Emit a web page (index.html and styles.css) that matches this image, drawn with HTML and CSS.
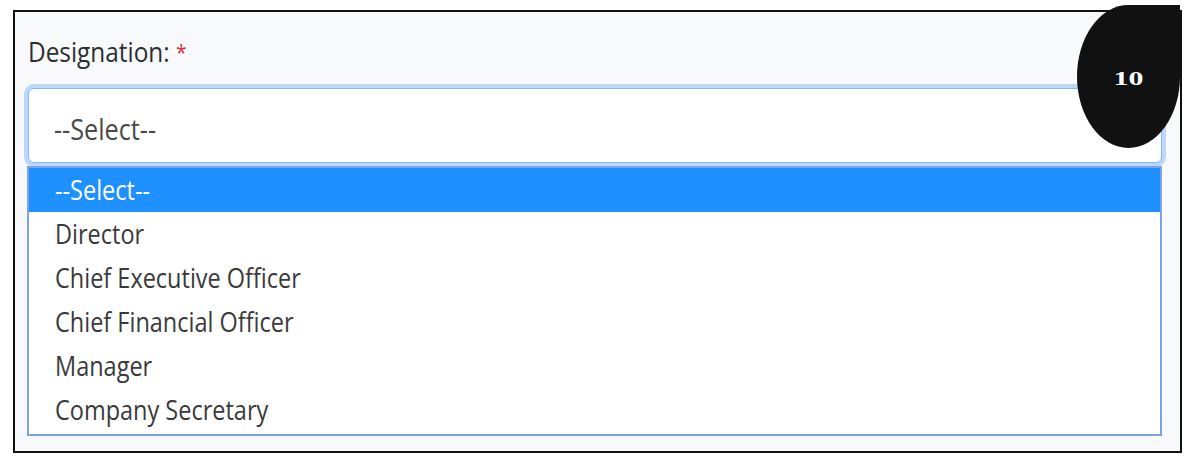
FILE: index.html
```html
<!DOCTYPE html>
<html lang="en">
<head>
    <meta charset="UTF-8">
    <title>Designation</title>
    <link rel="stylesheet" href="styles.css">
</head>
<body>
    <div class="panel">
        <label class="field-label"><span class="squeeze">Designation: <span class="req">*</span></span></label>
        <div class="select-box"><span class="squeeze">--Select--</span></div>
        <ul class="options">
            <li class="active"><span class="squeeze">--Select--</span></li>
            <li><span class="squeeze">Director</span></li>
            <li><span class="squeeze">Chief Executive Officer</span></li>
            <li><span class="squeeze">Chief Financial Officer</span></li>
            <li><span class="squeeze">Manager</span></li>
            <li><span class="squeeze">Company Secretary</span></li>
        </ul>
    </div>
    <div class="step-badge"><span>10</span></div>
</body>
</html>
```

FILE: styles.css
```css
body {
    margin: 0;
    background: #fff;
    font-family: "Open Sans", sans-serif;
}

.panel {
    box-sizing: border-box;
    width: 1169px;
    height: 443px;
    margin: 10px 0 0 13px;
    padding: 21px 18px 0 13px;
    border: 2px solid #111;
    background: #f8f9fa;
}

/* screenshot is squashed sideways, so text is too */
.squeeze {
    display: inline-block;
    transform: scaleX(0.87);
    transform-origin: 0 50%;
    white-space: nowrap;
}

.field-label {
    display: block;
    height: 36px;
    line-height: 36px;
    font-size: 28px;
    color: #2b2f33;
}

.req {
    color: #e02b35;
    font-size: 22px;
    vertical-align: top;
}

.select-box {
    box-sizing: border-box;
    height: 75px;
    margin-top: 19px;
    padding: 5px 0 0 25px;
    line-height: 70px;
    font-size: 29px;
    color: #4a4a4a;
    background: #fff;
    border: 1px solid #86b7fe;
    border-radius: 6px;
    box-shadow: 0 0 0 4px #bcd8fb;
}

.options {
    position: relative;
    margin: 3px 0 0 -1px;
    padding: 0 0 2px;
    list-style: none;
    background: #fff;
    border: 2px solid #7ea2e6;
}

.options li {
    height: 44px;
    line-height: 44px;
    padding-left: 26px;
    font-size: 27px;
    color: #3a3a3a;
}

.options li.active {
    background: #1e90ff;
    color: #fff;
}

.step-badge {
    position: absolute;
    left: 1077px;
    top: 5px;
    width: 103px;
    height: 143px;
    display: flex;
    align-items: center;
    justify-content: center;
    background: #111;
    border-radius: 50% 0 50% 50%;
    color: #fff;
    font-family: "Liberation Serif", serif;
    font-weight: bold;
    font-size: 30px;
}

.step-badge span {
    display: inline-block;
    transform: scaleY(0.66);
    margin-top: 2px;
}
```
